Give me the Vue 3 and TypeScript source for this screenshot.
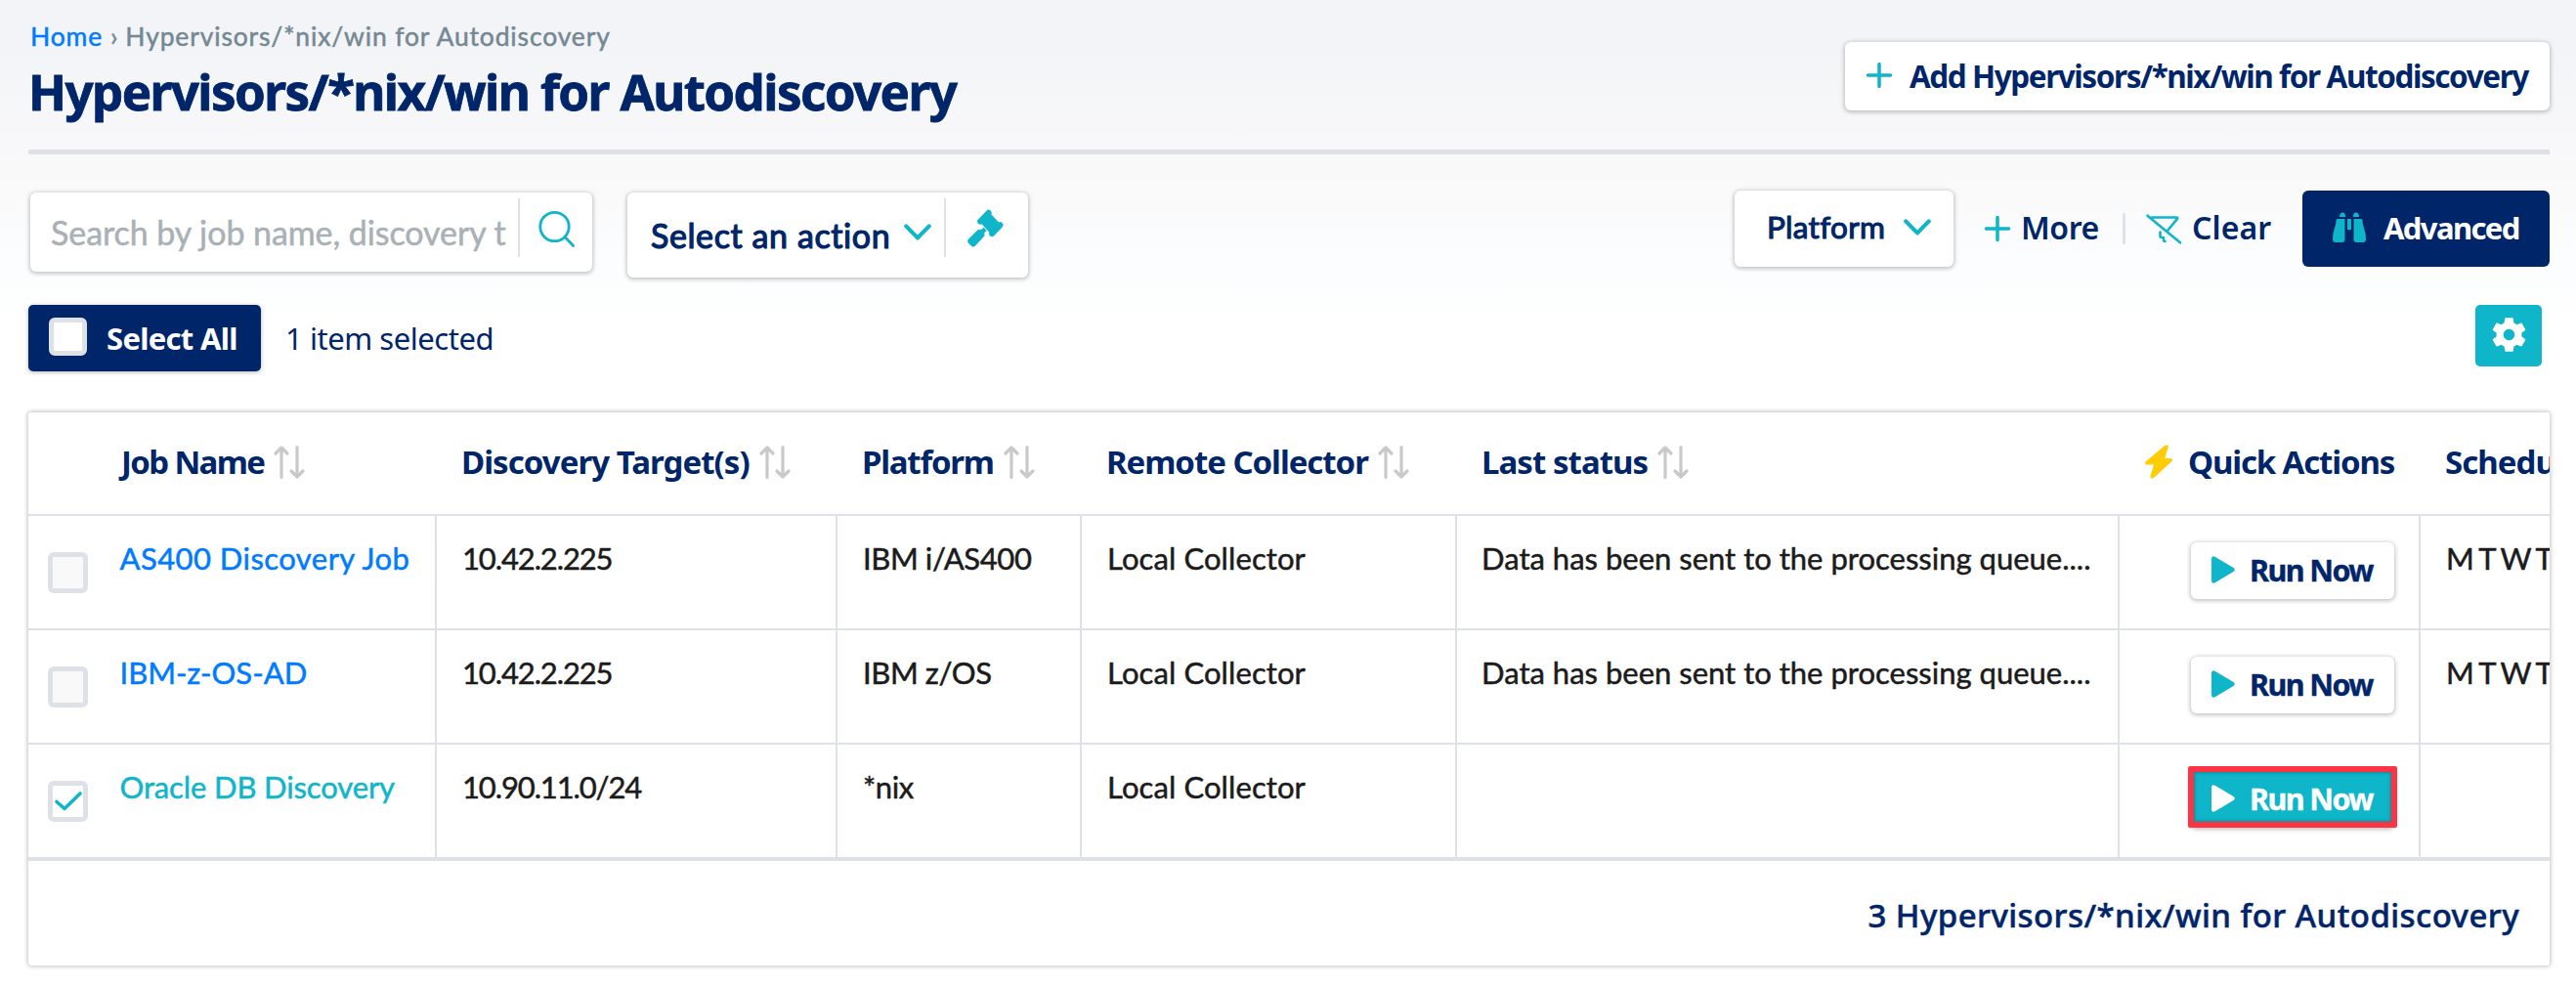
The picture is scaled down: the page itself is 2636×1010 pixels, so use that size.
<script setup lang="ts">
interface Column {
  key: string
  label: string
  sortable: boolean
}

interface Job {
  id: number
  name: string
  target: string
  platform: string
  collector: string
  status: string
  schedule: string
  selected: boolean
}

const entity = 'Hypervisors/*nix/win for Autodiscovery'

const columns: Column[] = [
  { key: 'name', label: 'Job Name', sortable: true },
  { key: 'target', label: 'Discovery Target(s)', sortable: true },
  { key: 'platform', label: 'Platform', sortable: true },
  { key: 'collector', label: 'Remote Collector', sortable: true },
  { key: 'status', label: 'Last status', sortable: true },
  { key: 'actions', label: 'Quick Actions', sortable: false },
  { key: 'schedule', label: 'Schedu', sortable: false },
]

const queued = 'Data has been sent to the processing queue....'

const jobs: Job[] = [
  { id: 1, name: 'AS400 Discovery Job', target: '10.42.2.225', platform: 'IBM i/AS400', collector: 'Local Collector', status: queued, schedule: 'M T W T', selected: false },
  { id: 2, name: 'IBM-z-OS-AD', target: '10.42.2.225', platform: 'IBM z/OS', collector: 'Local Collector', status: queued, schedule: 'M T W T', selected: false },
  { id: 3, name: 'Oracle DB Discovery', target: '10.90.11.0/24', platform: '*nix', collector: 'Local Collector', status: '', schedule: '', selected: true },
]
</script>

<template>
  <main class="page">
    <header class="head">
      <div class="head-text">
        <nav class="crumbs"><a class="home">Home</a><span class="sep">›</span><span>{{ entity }}</span></nav>
        <h1 class="title">{{ entity }}</h1>
      </div>
      <button class="box add">
        <svg class="plus" viewBox="0 0 26 26"><path d="M13 1.5v23M1.5 13h23" /></svg>
        <span class="add-label">Add {{ entity }}</span>
      </button>
    </header>

    <section class="toolbar">
      <div class="box search">
        <span class="placeholder">Search by job name, discovery t</span>
        <i class="split"></i>
        <svg class="search-icon" viewBox="0 0 38 38"><circle cx="16.5" cy="17" r="14.7" /><path d="M27 27.5l8.6 9" /></svg>
      </div>
      <div class="box action">
        <span class="action-label">Select an action</span>
        <svg class="chevron" viewBox="0 0 28 17"><path d="M2.2 2.4L14 14.4L25.8 2.4" /></svg>
        <i class="split"></i>
        <svg class="gavel" viewBox="0 0 40 42">
          <path d="M20.5 1.8q2.3-2.3 4.5 0q1.7 1.7.6 3.7l8 8.6q2-1 3.8.8q2.3 2.3 0 4.5l-8.800 9.300q-2.200 2.200-4.400 0q-1.700-1.700-.7-3.800l-8.200-8.800q-2 1-3.700-.7q-2.300-2.300 0-4.500z" />
          <path d="M17.500 19.700l3.200 3.300l-2.600 2.700q1 2.200-.6 4l-9 9.800q-2.200 2.300-4.500 0l-2.700-2.800q-2.200-2.300 0-4.600l9.300-9.300q1.700-1.700 4-.6z" />
        </svg>
      </div>

      <div class="filters">
        <div class="box platform">
          <span class="platform-label">Platform</span>
          <svg class="chevron" viewBox="0 0 28 17"><path d="M2.2 2.4L14 14.4L25.8 2.4" /></svg>
        </div>
        <a class="link more">
          <svg class="plus" viewBox="0 0 26 26"><path d="M13 1.5v23M1.5 13h23" /></svg>
          <span>More</span>
        </a>
        <i class="pipe"></i>
        <a class="link clear">
          <svg class="funnel" viewBox="0 0 37 31"><path d="M1.5 1.7L35 29.3M6 3.500h25q2 0 .8 1.700L22 17M14.500 18.500v4q0 1.500 1.500 1.500h2v2q0 2 1.500 2" /></svg>
          <span>Clear</span>
        </a>
        <button class="advanced">
          <svg class="binoculars" viewBox="0 0 34 31">
            <path d="M7 5q0-4.500 3.500-4.500q2.500 0 2.500 4.500zM15 7v11h4V7zM21 5q0-4.500 2.500-4.500q3.500 0 3.500 4.500zM5 7h7.500v21q0 3-3 3H3q-3 0-3-3.500q0-6 2-11q1.500-4.500 1.500-8q0-1.500 1.500-1.500zM29 7h-7.500v21q0 3 3 3H31q3 0 3-3.500q0-6-2-11q-1.500-4.500-1.500-8q0-1.500-1.500-1.500z" />
          </svg>
          <span>Advanced</span>
        </button>
      </div>
    </section>

    <section class="selection">
      <button class="select-all"><i class="check-box"></i><span>Select All</span></button>
      <span class="count">1 item selected</span>
      <button class="settings">
        <svg class="gear" viewBox="2 1.7 20 20.6">
          <path d="M19.140 12.940c.04-.3.060-.61.060-.94 0-.32-.02-.64-.07-.94l2.030-1.580c.18-.14.230-.41.120-.61l-1.920-3.320c-.12-.22-.37-.29-.59-.22l-2.390.96c-.5-.38-1.030-.7-1.620-.94l-.36-2.540c-.04-.24-.24-.41-.48-.41h-3.840c-.24 0-.43.170-.47.410l-.36 2.540c-.59.240-1.130.570-1.620.940l-2.390-.96c-.22-.08-.47 0-.59.220L2.740 8.870c-.12.210-.08.470.120.610l2.030 1.580c-.05.300-.09.630-.09.940s.020.640.070.940l-2.030 1.580c-.18.140-.23.410-.12.610l1.920 3.320c.12.220.37.290.59.220l2.390-.96c.5.380 1.030.700 1.620.940l.36 2.540c.05.240.24.410.48.410h3.840c.24 0 .44-.17.470-.41l.36-2.540c.59-.24 1.130-.56 1.620-.94l2.390.96c.22.080.47 0 .59-.22l1.920-3.320c.12-.22.070-.47-.12-.61l-2.010-1.580zM12 15.200c-1.770 0-3.200-1.430-3.200-3.200s1.430-3.200 3.200-3.200 3.200 1.430 3.200 3.200-1.430 3.200-3.200 3.200z" />
        </svg>
      </button>
    </section>

    <section class="table">
      <div class="row head-row">
        <div v-for="col in columns" :key="col.key" class="th" :class="'th-' + col.key">
          <svg v-if="col.key === 'actions'" class="bolt" viewBox="0 0 28 35">
            <path d="M20.500.8q3-1.800 3.400 1.200L20.300 14H26q3 .6 1.500 3L9.500 33.600q-4 2.400-4.200-.8L9 20.500H2q-3-.6-1.500-3z" />
          </svg>
          <span>{{ col.label }}</span>
          <svg v-if="col.sortable" class="sort" viewBox="0 0 32 34"><path d="M8 32.500V2M2 8L8 2l6 6M24 1.500V32M18 26l6 6l6-6" /></svg>
        </div>
      </div>
      <div v-for="job in jobs" :key="job.id" class="row body-row" :class="{ selected: job.selected }">
        <div class="td td-name">
          <i class="check-box">
            <svg v-if="job.selected" class="tick" viewBox="0 0 28 20"><path d="M2 10.500L10 17.500L26 2" /></svg>
          </i>
          <a class="job" :class="'job-' + job.id">{{ job.name }}</a>
        </div>
        <div class="td td-target">{{ job.target }}</div>
        <div class="td td-platform">{{ job.platform }}</div>
        <div class="td td-collector">{{ job.collector }}</div>
        <div class="td td-status">{{ job.status }}</div>
        <div class="td td-actions">
          <button class="box run">
            <svg class="play" viewBox="0 0 24 28"><path d="M0 3Q0-1 4 1L22.500 12Q25 14 22.500 16L4 27Q0 29 0 25z" /></svg>
            <span>Run Now</span>
          </button>
        </div>
        <div class="td td-schedule">{{ job.schedule }}</div>
      </div>
      <footer class="foot"><span>3 {{ entity }}</span></footer>
    </section>
  </main>
</template>

<style>
body {
  background: #fff;
}
</style>

<style scoped>
* {
  box-sizing: border-box;
}
.page {
  --navy: #002569;
  --teal: #0fb5c8;
  --line: #dee2e8;
  width: 2636px;
  height: 1010px;
  padding: 0 27px 0 29px;
  overflow: hidden;
  background: linear-gradient(#f1f3f7 0, #f3f4f7 40px, #f9f9fa 180px, #fcfdfe 275px, #fff 345px);
  font-family: "Noto Sans", sans-serif;
  font-variant-ligatures: none;
  color: var(--navy);
}
button {
  margin: 0;
  padding: 0;
  border: 0;
  font: inherit;
  color: inherit;
}
svg {
  display: block;
  flex: none;
  overflow: visible;
  fill: none;
  stroke: var(--teal);
  stroke-linecap: round;
  stroke-linejoin: round;
}
span,
a {
  white-space: pre;
}
.box {
  display: flex;
  background: #fff;
  border-radius: 6px;
  box-shadow: 0 1px 4px 1px rgba(0, 0, 0, 0.24);
}
.head {
  display: flex;
  justify-content: space-between;
  height: 158px;
  border-bottom: 5px solid var(--line);
}
.crumbs {
  display: flex;
  margin-top: 22px;
  padding-left: 2px;
  font: 26.5px/30px Lato, sans-serif;
  letter-spacing: 0.85px;
  color: #748893;
  -webkit-text-stroke: 0.5px currentColor;
}
.home {
  color: #007bff;
}
.sep {
  margin: 0 7px 0 8px;
}
.title {
  margin: 11px 0 0;
  font-size: 51px;
  line-height: 60px;
  font-weight: 700;
  letter-spacing: -1.57px;
  white-space: nowrap;
  -webkit-text-stroke: 0.8px currentColor;
}
.add {
  align-items: center;
  width: 721px;
  height: 70px;
  margin-top: 43px;
  padding: 0 0 2px 22px;
  font-size: 31.5px;
  font-weight: 700;
}
.plus {
  width: 26px;
  height: 26px;
  stroke-width: 3.5;
}
.add-label {
  margin-left: 18px;
  letter-spacing: -1.43px;
}
.toolbar {
  display: flex;
  align-items: flex-start;
  height: 154px;
  padding-top: 39px;
}
.search {
  width: 575px;
  height: 81px;
  margin-left: 2px;
  padding-left: 21px;
}
.placeholder {
  width: 478px;
  overflow: hidden;
  font: 34px/82px Lato, sans-serif;
  letter-spacing: -0.07px;
  color: #a9b1b6;
  -webkit-text-stroke: 0.5px currentColor;
}
.split {
  width: 2px;
  height: 60px;
  margin-top: 6px;
  background: var(--line);
}
.search-icon {
  width: 38px;
  height: 38px;
  margin: 18px 0 0 19px;
  stroke-width: 2.8;
}
.action {
  width: 410px;
  height: 87px;
  margin-left: 36px;
}
.action-label {
  width: 283px;
  padding-left: 24px;
  font: 34px/88px Lato, sans-serif;
  letter-spacing: 0.6px;
  -webkit-text-stroke: 1.2px var(--navy);
}
.chevron {
  width: 28px;
  height: 17px;
  stroke-width: 4.2;
}
.action .chevron {
  margin: 32px 13px 0 0;
}
.gavel {
  width: 40px;
  height: 40px;
  margin: 17px 0 0 21px;
  fill: var(--teal);
  stroke: none;
}
.filters {
  display: flex;
  align-items: center;
  height: 78px;
  margin: -2px 0 0 auto;
  font-size: 32px;
}
.platform {
  align-items: center;
  width: 224px;
  height: 78px;
  padding: 0 23px 4px 33px;
  justify-content: space-between;
}
.platform-label {
  font: 31.5px/40px Lato, sans-serif;
  letter-spacing: 0.3px;
  -webkit-text-stroke: 1.1px var(--navy);
}
.link {
  display: flex;
  align-items: center;
  font-weight: 600;
  line-height: 74px;
}
.link span {
  padding-bottom: 2px;
}
.more {
  width: 141px;
  margin-left: 32px;
  gap: 11px;
  letter-spacing: -0.4px;
}
.pipe {
  width: 3px;
  height: 32px;
  border-radius: 2px;
  background: var(--line);
}
.clear {
  width: 160px;
  margin-left: 21px;
  gap: 10px;
  letter-spacing: 0.1px;
}
.funnel {
  width: 37px;
  height: 31px;
  stroke-width: 2.6;
}
.advanced {
  display: flex;
  align-items: center;
  width: 253px;
  height: 78px;
  padding: 0 0 3px 31px;
  gap: 18px;
  border-radius: 6px;
  background: var(--navy);
  color: #fff;
  font-size: 31px;
  font-weight: 700;
  letter-spacing: -1.6px;
}
.binoculars {
  width: 34px;
  height: 31px;
  fill: var(--teal);
  stroke: none;
}
.selection {
  display: flex;
  align-items: flex-start;
  height: 110px;
  font-size: 31px;
}
.select-all {
  display: flex;
  align-items: center;
  width: 238px;
  height: 68px;
  padding-left: 21px;
  gap: 20px;
  border-radius: 5px;
  background: var(--navy);
  box-shadow: 0 1px 4px rgba(0, 0, 0, 0.3);
  color: #fff;
  font-weight: 700;
  letter-spacing: -0.7px;
}
.check-box {
  display: flex;
  align-items: center;
  justify-content: center;
  flex: none;
  width: 41px;
  height: 42px;
  border: 5px solid var(--line);
  border-radius: 6px;
  background: #f9f9f9;
}
.select-all .check-box {
  width: 39px;
  height: 39px;
  margin-bottom: 3px;
  background: #fff;
}
.count {
  margin-left: 25px;
  line-height: 68px;
  letter-spacing: -0.45px;
}
.settings {
  display: flex;
  justify-content: center;
  width: 68px;
  height: 63px;
  margin: 0 8px 0 auto;
  padding-top: 12px;
  border-radius: 5px;
  background: var(--teal);
}
.gear {
  width: 37px;
  height: 37px;
  fill: #fff;
  stroke: none;
}
.table {
  width: 2580px;
  height: 566px;
  overflow: hidden;
  border-radius: 3px;
  background: #fff;
  box-shadow: 0 0 4px 1px rgba(0, 0, 0, 0.24);
}
.row {
  display: grid;
  grid-template-columns: 418px 410px 250px 384px 678px 308px 132px;
  height: 117px;
  border-bottom: 2px solid var(--line);
}
.head-row {
  height: 106px;
}
.th {
  display: flex;
  align-items: center;
  padding: 0 0 3px 25px;
  font-size: 33px;
  font-weight: 700;
  letter-spacing: -0.95px;
}
.th-name {
  padding-left: 95px;
  letter-spacing: -1.65px;
}
.th-platform {
  letter-spacing: -1.26px;
}
.th-collector {
  letter-spacing: -1.05px;
}
.th-actions {
  padding-left: 26px;
  letter-spacing: -1.16px;
}
.th-schedule {
  overflow: hidden;
}
.sort {
  width: 32px;
  height: 34px;
  margin-left: 10px;
  stroke: #c9c9c9;
  stroke-width: 3.2;
}
.bolt {
  width: 28px;
  height: 35px;
  margin-right: 16px;
  fill: #ffcd05;
  stroke: none;
}
.body-row:nth-child(4) {
  height: 119px;
  border-bottom-width: 4px;
}
.td {
  padding: 23px 0 0 26px;
  border-right: 2px solid var(--line);
  font: 31px/40px Lato, sans-serif;
  color: #1b1b1b;
  white-space: pre;
  overflow: hidden;
  -webkit-text-stroke: 0.5px currentColor;
}
.td-name {
  display: flex;
  align-items: flex-start;
  padding-left: 20px;
}
.td-name .check-box {
  margin: 14px 32.5px 0 0;
}
.tick {
  width: 28px;
  height: 20px;
  stroke-width: 3.6;
}
.job {
  color: #007bff;
}
.job-1 {
  letter-spacing: 0.44px;
}
.job-3 {
  letter-spacing: -0.13px;
}
.selected .job {
  color: var(--teal);
}
.selected .check-box {
  background: #fff;
}
.td-target {
  letter-spacing: -1.12px;
}
.td-platform {
  letter-spacing: -0.4px;
}
.td-collector {
  letter-spacing: 0.1px;
}
.td-status {
  padding-left: 25px;
}
.td-actions {
  padding: 27px 0 0 73px;
  overflow: visible;
  -webkit-text-stroke: 0;
}
.td-schedule {
  padding-left: 26px;
  border-right: 0;
  letter-spacing: -0.4px;
  word-spacing: -1.8px;
}
.run {
  position: relative;
  align-items: center;
  width: 208px;
  height: 58px;
  padding: 0 0 2px 21px;
  gap: 15px;
  font: 700 30.5px/40px "Noto Sans", sans-serif;
  letter-spacing: -1.6px;
  color: var(--navy);
  -webkit-text-stroke: 0.4px currentColor;
}
.play {
  width: 24px;
  height: 28px;
  fill: var(--teal);
  stroke: none;
}
.selected .run {
  background: var(--teal);
  color: #fff;
}
.selected .play {
  fill: #fff;
}
.selected .run::after {
  content: "";
  position: absolute;
  inset: -5px -3px 0 -3px;
  border: 6px solid #fc3444;
  border-radius: 2px;
  box-shadow: inset 0 0 3px 1px rgba(0, 60, 70, 0.35);
}
.foot {
  display: flex;
  align-items: center;
  justify-content: flex-end;
  height: 107px;
  padding: 3px 31px 0 0;
  font-size: 33px;
  font-weight: 500;
  letter-spacing: 0.42px;
  -webkit-text-stroke: 0.5px currentColor;
}
</style>
